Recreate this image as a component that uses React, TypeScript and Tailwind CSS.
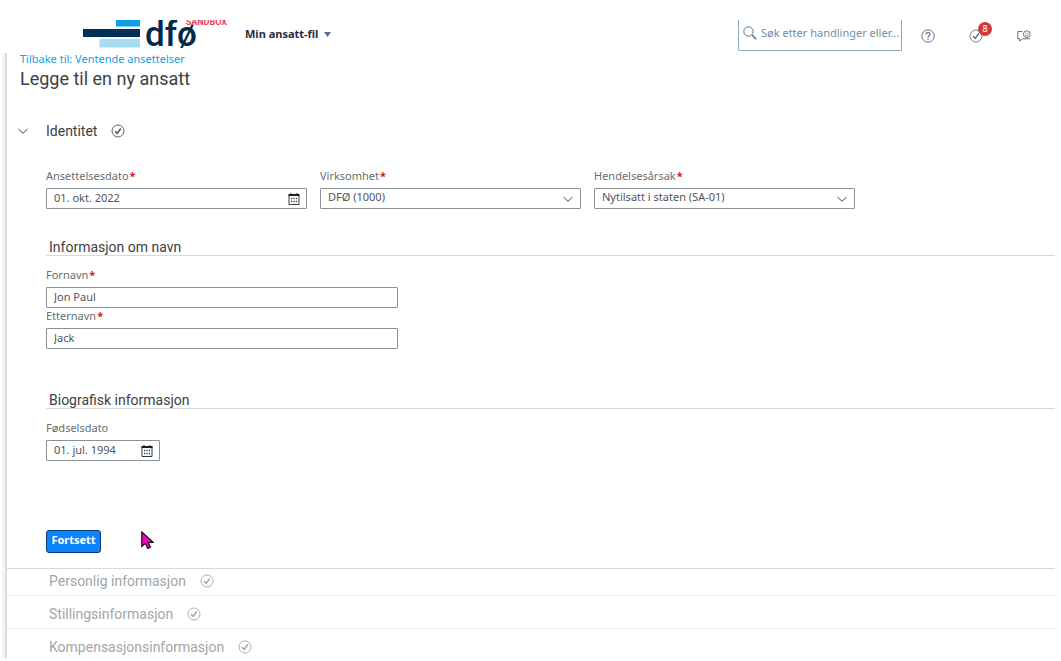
import { useState } from "react";
import type { ReactNode } from "react";

const lockedSections = [
  "Personlig informasjon",
  "Stillingsinformasjon",
  "Kompensasjonsinformasjon",
];

const inputStyle =
  "block w-full h-[21px] border border-[#89919a] rounded-[1px] bg-white pl-[7px] pb-0.5 text-[11px] text-[#51555a] outline-none focus:border-[#0070f2]";

const CheckCircle = () => (
  <svg width="14" height="14" viewBox="0 0 14 14" fill="none" stroke="currentColor" aria-hidden="true">
    <circle cx="7" cy="7" r="6" strokeWidth="0.9" />
    <path d="M4 7.2 6.2 9.4 9.800 4.600" strokeWidth="1.600" />
  </svg>
);

const ChevronDown = () => (
  <svg width="12" height="8" viewBox="0 0 12 8" fill="none" stroke="currentColor" aria-hidden="true">
    <path d="M1.500 2 6 6.300 10.500 2" />
  </svg>
);

const CalendarIcon = () => (
  <svg width="12" height="12" viewBox="0 0 12 12" fill="none" aria-hidden="true">
    <path d="M1 2v9.500h10V2" stroke="#32363a" />
    <path d="M.5 1h11v2H.5z" fill="#1d2023" />
    <path d="M3 0v1.500M9 0v1.500" stroke="#1d2023" />
    <path
      d="M3 5.500h1.300M5.400 5.500h1.300M7.800 5.500h1.300M3 8.500h1.300M5.400 8.500h1.300M7.800 8.500h1.300"
      stroke="#354a5f"
      strokeWidth="1.500"
    />
  </svg>
);

const Logo = () => (
  <a href="#hjem" aria-label="DFØ" className="relative flex h-[33px] w-[144px] gap-1">
    <svg width="58" height="33" viewBox="0 0 58 33" className="shrink-0" aria-hidden="true">
      <path d="M33 0h24v6.500H33z" fill="#0a9fe6" />
      <path d="M0 9h57v8H0z" fill="#00305a" />
      <path d="M16.500 19H57v8.500H16.500z" fill="#a5dcf4" />
    </svg>
    <span className="font-[Roboto,sans-serif] text-[35px] leading-[29px] font-medium text-[#00294e]">dfø</span>
    <span className="absolute -top-1 right-0 font-[Roboto,sans-serif] text-[9px] leading-3 font-bold text-[#ee4056]">
      SANDBOX
    </span>
  </a>
);

type FieldProps = {
  id: string;
  label: string;
  required?: boolean;
  children: ReactNode;
};

const Field = ({ id, label, required, children }: FieldProps) => (
  <div>
    <label htmlFor={id} className="block h-5 text-[11px] leading-4 text-[#6a6d70]">
      {label}
      {required && <span className="ml-px font-bold text-[#cc1919]">*</span>}
    </label>
    {children}
  </div>
);

const DateInput = ({ id, initial }: { id: string; initial: string }) => {
  const [value, setValue] = useState(initial);

  return (
    <div className="relative">
      <input id={id} type="text" className={inputStyle} value={value} onChange={(e) => setValue(e.target.value)} />
      <button type="button" aria-label="Åpne kalender" className="absolute inset-y-0 right-[7px] flex items-center">
        <CalendarIcon />
      </button>
    </div>
  );
};

const SelectInput = ({ id, options }: { id: string; options: string[] }) => (
  <div className="relative">
    <select id={id} className={`${inputStyle} appearance-none`}>
      {options.map((option) => (
        <option key={option}>{option}</option>
      ))}
    </select>
    <span className="pointer-events-none absolute inset-y-0 right-[7px] flex items-center text-[#354a5f]">
      <ChevronDown />
    </span>
  </div>
);

const Header = () => (
  <header className="flex h-[33px] items-start overflow-hidden pl-[83px] pr-6 text-[#5b738b]">
    <Logo />
    <button type="button" className="ml-[18px] flex h-[29px] items-center gap-[6px] text-[11px] font-bold text-[#1d2d3e]">
      Min ansatt-fil
      <svg width="7" height="5" viewBox="0 0 7 5" fill="#5b738b" aria-hidden="true">
        <path d="M0 0h7L3.500 5z" />
      </svg>
    </button>
    <label className="ml-auto flex h-[31px] w-[164px] items-center gap-1 rounded-b-[2px] border border-t-0 border-[#8fa4b8] pb-1 pl-1">
      <svg width="14" height="14" viewBox="0 0 14 14" fill="none" stroke="currentColor" className="shrink-0" aria-hidden="true">
        <circle cx="5.500" cy="5.500" r="4.700" />
        <path d="m9 9 4.200 4.200" strokeWidth="1.600" />
      </svg>
      <input
        type="text"
        aria-label="Søk"
        placeholder="Søk etter handlinger eller..."
        className="w-full min-w-0 text-[11px] outline-none placeholder:text-[#758ca4]"
      />
    </label>
    <div className="ml-[19px] flex h-[31px] items-center gap-[34px]">
      <button type="button" aria-label="Hjelp">
        <svg width="14" height="14" viewBox="0 0 14 14" fill="none" stroke="currentColor" aria-hidden="true">
          <circle cx="7" cy="7" r="6.200" />
          <path d="M5 5.600C5 4.300 5.900 3.700 7 3.700s2 .7 2 1.700c0 1.400-2 1.400-2 3" strokeWidth="1.200" />
          <path d="M7 9.400v1.300" strokeWidth="1.300" />
        </svg>
      </button>
      <button type="button" aria-label="Oppgaver" className="relative">
        <CheckCircle />
        <span className="absolute -top-[7px] left-[9px] flex size-[14px] items-center justify-center rounded-full bg-[#d23a3a] text-[9px] leading-none text-white">
          8
        </span>
      </button>
      <button type="button" aria-label="Tilbakemelding">
        <svg width="14" height="12" viewBox="0 0 14 12" fill="none" stroke="currentColor" aria-hidden="true">
          <path d="M5.500 1.500H.8v7.300h2v2.400l2.400-2.400h7.300V8" />
          <circle cx="9.800" cy="4.200" r="3.400" strokeWidth="0.900" />
          <path d="M8 4.800c.7 1.300 2.900 1.300 3.600 0M8 3.200h1.200M10.400 3.200h1.200" strokeWidth="0.900" />
        </svg>
      </button>
    </div>
  </header>
);

const SectionTitle = ({ children }: { children: ReactNode }) => (
  <h3 className="border-b border-[#d9d9d9] pl-[3px] pt-0.5 font-[Roboto,sans-serif] text-sm leading-4 text-[#3c4044]">
    {children}
  </h3>
);

const App = () => {
  const [firstName, setFirstName] = useState("Jon Paul");
  const [lastName, setLastName] = useState("Jack");

  return (
    <div className="bg-white pt-5 pr-[6px] font-['Noto_Sans',sans-serif]">
      <Header />

      <div className="ml-[2px] border-l-[3px] border-[#f5f5f5]">
        <main className="h-[605px] overflow-hidden border-l-2 border-[#dcdcdc]">
          <div className="pl-[13px]">
            <a href="#ventende" className="block text-[11px] leading-3 text-[#1a9be0]">
              Tilbake til: Ventende ansettelser
            </a>
            <h1 className="mt-0.5 font-[Roboto,sans-serif] text-lg leading-6 text-[#3c4044]">Legge til en ny ansatt</h1>
          </div>

          <section className="pl-[39px]">
            <button
              type="button"
              aria-expanded="true"
              className="-ml-[29px] mt-[30px] flex h-5 items-center font-[Roboto,sans-serif] text-sm text-[#3c4044]"
            >
              <ChevronDown />
              <span className="ml-[17px]">Identitet</span>
              <span className="ml-[14px] text-[#51555a]">
                <CheckCircle />
              </span>
            </button>

            <div className="mt-[27px] grid max-w-[809px] grid-cols-3 gap-x-[13px]">
              <Field id="hireDate" label="Ansettelsesdato" required>
                <DateInput id="hireDate" initial="01. okt. 2022" />
              </Field>
              <Field id="company" label="Virksomhet" required>
                <SelectInput id="company" options={["DFØ (1000)"]} />
              </Field>
              <Field id="reason" label="Hendelsesårsak" required>
                <SelectInput id="reason" options={["Nytilsatt i staten (SA-01)"]} />
              </Field>
            </div>

            <div className="mt-7">
              <SectionTitle>Informasjon om navn</SectionTitle>
            </div>
            <div className="mt-[11px] max-w-[352px]">
              <Field id="firstName" label="Fornavn" required>
                <input
                  id="firstName"
                  type="text"
                  className={inputStyle}
                  value={firstName}
                  onChange={(e) => setFirstName(e.target.value)}
                />
              </Field>
              <Field id="lastName" label="Etternavn" required>
                <input
                  id="lastName"
                  type="text"
                  className={inputStyle}
                  value={lastName}
                  onChange={(e) => setLastName(e.target.value)}
                />
              </Field>
            </div>

            <div className="mt-[41px]">
              <SectionTitle>Biografisk informasjon</SectionTitle>
            </div>
            <div className="mt-[11px] w-[114px]">
              <Field id="birthDate" label="Fødselsdato">
                <DateInput id="birthDate" initial="01. jul. 1994" />
              </Field>
            </div>

            <div className="mt-[69px] flex items-start gap-10 pb-[15px]">
              <button
                type="button"
                className="h-[23px] w-[55px] rounded-[3px] border border-[#0a3d70] bg-[#0a84ff] pb-0.5 text-[11px] font-bold text-white"
              >
                Fortsett
              </button>
              <svg width="13" height="19" viewBox="0 0 13 19" className="mt-px" aria-hidden="true">
                <path d="M.8 1v14.500l3.600-3.300 2.300 5.300 2.700-1.200-2.300-5h5z" fill="#f0c" stroke="#111" strokeWidth="1.200" />
              </svg>
            </div>
          </section>

          <ul className="border-t border-[#d9d9d9]">
            {lockedSections.map((title) => (
              <li key={title} className="border-b border-[#ececec] pb-1 pl-[42px] pt-2 first:pt-[2px]">
                <button
                  type="button"
                  disabled
                  className="flex h-5 items-center gap-[14px] font-[Roboto,sans-serif] text-sm text-[#a3a5a7]"
                >
                  {title}
                  <CheckCircle />
                </button>
              </li>
            ))}
          </ul>
        </main>
      </div>
    </div>
  );
};

export default App;
